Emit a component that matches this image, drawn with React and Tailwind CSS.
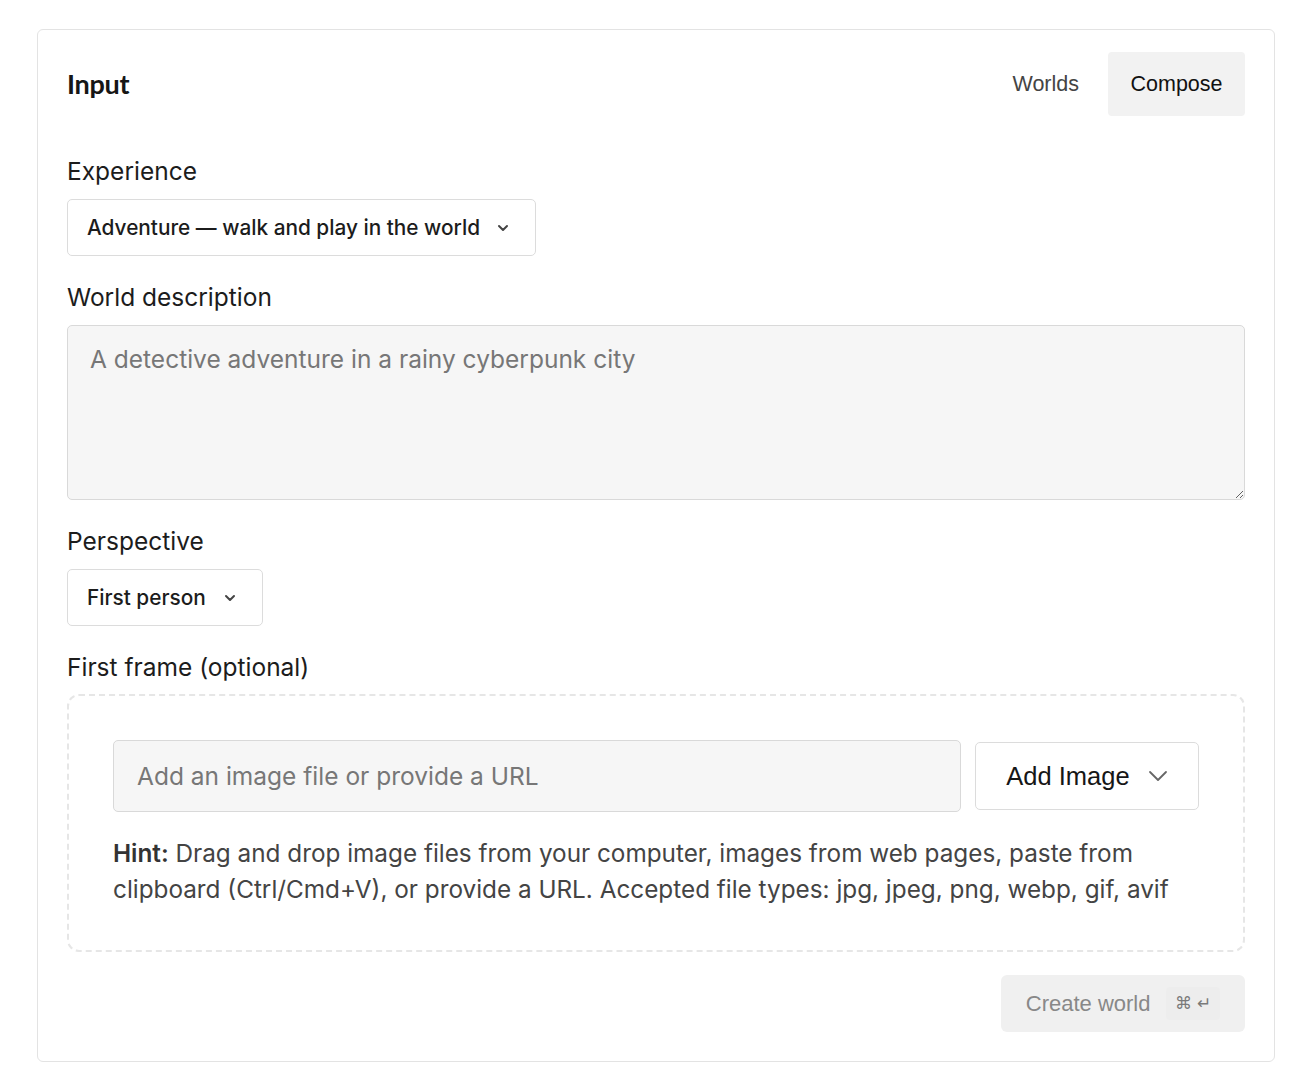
import React from "react";

const plex = { fontFamily: 'Inter, "Noto Sans", sans-serif' };

function Chevron({ className = "" }) {
  return (
    <svg viewBox="0 0 12 8" className={className} fill="none" stroke="currentColor" strokeWidth="2" strokeLinecap="round" strokeLinejoin="round">
      <path d="M2 2l4 4 4-4" />
    </svg>
  );
}

export default function App() {
  return (
    <div className="min-h-[1092px] bg-white pt-[29px] pl-[37px] pr-[27px]" style={plex}>
      <div className="w-[1238px] border border-[#e3e3e3] rounded-[6px] px-[29px] pt-[22px] pb-[29px]">
        {/* Header */}
        <div className="flex items-center justify-between h-[64px]">
          <h1 className="text-[27px] font-bold text-[#161616] tracking-[-0.3px]" style={{ fontFamily: 'Lato, sans-serif' }}>Input</h1>
          <div className="flex items-center h-full" style={{ fontFamily: '"Liberation Sans", Arial, sans-serif' }}>
            <button className="h-full px-[29px] text-[21.5px] text-[#444]">Worlds</button>
            <button className="h-full w-[137px] text-[21.5px] text-[#111] bg-[#f2f2f2] rounded-[4px]">Compose</button>
          </div>
        </div>

        {/* Experience */}
        <div className="mt-[40px]">
          <div className="text-[24.5px] leading-[30px] text-[#1c1c1c]">Experience</div>
          <button className="mt-[13px] h-[57px] w-[469px] flex items-center justify-between pl-[19px] pr-[26px] border border-[#dcdcdc] rounded-[5px] bg-white">
            <span className="text-[20.8px] font-medium text-[#1c1c1c]">Adventure — walk and play in the world</span>
            <Chevron className="w-[12px] h-[8px] text-[#444]" />
          </button>
        </div>

        {/* World description */}
        <div className="mt-[26px]">
          <div className="text-[24.5px] leading-[30px] text-[#1c1c1c]">World description</div>
          <textarea
            className="mt-[13px] block w-full h-[175px] bg-[#f6f6f6] border border-[#d9d9d9] rounded-[5px] px-[22px] py-[17px] text-[24.5px] leading-[32px] text-[#222] placeholder:text-[#777] outline-none"
            style={plex}
            placeholder="A detective adventure in a rainy cyberpunk city"
          />
        </div>

        {/* Perspective */}
        <div className="mt-[26px]">
          <div className="text-[24.5px] leading-[30px] text-[#1c1c1c]">Perspective</div>
          <button className="mt-[13px] h-[57px] w-[196px] flex items-center justify-between pl-[19px] pr-[26px] border border-[#dcdcdc] rounded-[5px] bg-white">
            <span className="text-[20.8px] font-medium text-[#1c1c1c]">First person</span>
            <Chevron className="w-[12px] h-[8px] text-[#444]" />
          </button>
        </div>

        {/* First frame */}
        <div className="mt-[26px]">
          <div className="text-[24.5px] leading-[30px] text-[#1c1c1c]">First frame (optional)</div>
          <div className="mt-[12px] border-2 border-dashed border-[#e6e6e6] rounded-[12px] px-[44px] pt-[44px] pb-[43px]">
            <div className="flex items-center gap-[14px]">
              <div className="flex-1 h-[72px] bg-[#f6f6f6] border border-[#d9d9d9] rounded-[5px] flex items-center px-[23px] text-[24.5px] text-[#777]">
                Add an image file or provide a URL
              </div>
              <button className="h-[68px] w-[224px] flex items-center justify-center gap-[18px] border border-[#dcdcdc] rounded-[5px] bg-white" style={{ fontFamily: '"Liberation Sans", Arial, sans-serif' }}>
                <span className="text-[25.5px] text-[#161616]">Add Image</span>
                <svg viewBox="0 0 20 12" className="w-[20px] h-[12px] text-[#666]" fill="none" stroke="currentColor" strokeWidth="1.8" strokeLinecap="round" strokeLinejoin="round">
                  <path d="M2 2l8 8 8-8" />
                </svg>
              </button>
            </div>
            <p className="mt-[23px] text-[24.3px] leading-[36px] text-[#444]">
              <b className="font-semibold text-[#333]">Hint:</b> Drag and drop image files from your computer, images from web pages, paste from
              <br />
              clipboard (Ctrl/Cmd+V), or provide a URL. Accepted file types: jpg, jpeg, png, webp, gif, avif
            </p>
          </div>
        </div>

        {/* Footer */}
        <div className="mt-[23px] flex justify-end">
          <button className="h-[57px] w-[244px] bg-[#f0f0f0] rounded-[6px] flex items-center justify-center gap-[16px] text-[#888]" style={{ fontFamily: '"Liberation Sans", Arial, sans-serif' }}>
            <span className="text-[22px]">Create world</span>
            <span className="text-[17px] px-[9px] py-[4px] rounded-[4px] bg-[#ededed] text-[#7a7a7a]">⌘ ↵</span>
          </button>
        </div>
      </div>
    </div>
  );
}
